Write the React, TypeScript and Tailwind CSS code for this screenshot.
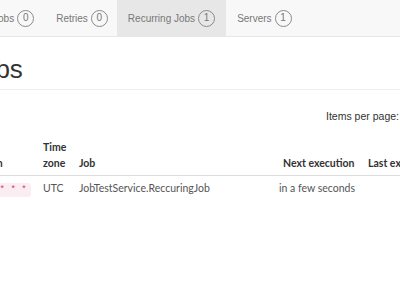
import React from "react";

function Badge({ n }: { n: number }) {
  return (
    <span className="ml-[3px] inline-flex h-[17px] w-[17px] items-center justify-center rounded-full border border-[#8a8a8a] text-[10px] leading-none text-[#777]">
      {n}
    </span>
  );
}

function Tab({ label, n, active }: { label: string; n: number; active?: boolean }) {
  return (
    <div
      className={
        "flex h-full shrink-0 items-center px-[11px] " + (active ? "bg-[#e7e7e7]" : "")
      }
    >
      <span className="text-[10px] text-[#777]">{label}</span>
      <Badge n={n} />
    </div>
  );
}

export default function App() {
  return (
    <div
      className="h-[284px] w-[400px] overflow-hidden bg-white"
      style={{ fontFamily: '"Liberation Sans", Arial, sans-serif' }}
    >
      <div className="flex h-[37px] border-b border-[#e7e7e7] bg-[#f8f8f8]">
        <div className="-ml-[68px] flex h-full">
          <Tab label="Scheduled Jobs" n={0} />
          <div className="-mr-[2px] flex">
            <Tab label="Retries" n={0} />
          </div>
          <Tab label="Recurring Jobs" n={1} active />
          <Tab label="Servers" n={1} />
        </div>
      </div>
      <div className="border-b border-[#eee] pb-[5px] pt-[17px]">
        <h1 className="-ml-[152px] whitespace-nowrap text-[26px] leading-[30px] text-[#333]">
          Recurring Jobs
        </h1>
      </div>
      <div className="flex justify-end pr-[1px] pt-[19px] text-[10.5px] text-[#333]">
        Items per page:
      </div>
      <div
        style={{ fontFamily: 'Lato, "Noto Sans", sans-serif' }}
        className="-ml-[140px] mt-[14px] w-[700px] text-[10.5px]"
      >
        <div className="flex items-end border-b border-[#ddd] pb-[4px] font-bold text-[#333]">
          <div className="w-[183px] shrink-0 pl-[120px] leading-[16px]">Cron</div>
          <div className="w-[36px] shrink-0 leading-[16px]">
            Time
            <br />
            zone
          </div>
          <div className="w-[200px] shrink-0 leading-[16px]">Job</div>
          <div className="w-[89px] shrink-0 pl-[4px] leading-[16px]">Next execution</div>
          <div className="w-[100px] shrink-0 leading-[16px]">Last execution</div>
        </div>
        <div className="flex items-center py-[5px] text-[#555]">
          <div className="w-[183px] shrink-0 pl-[114px]">
            <span
              className="rounded-[3px] bg-[#fbeef2] px-[4px] py-[2px] text-[9px] text-[#d6336c]"
              style={{ fontFamily: '"Liberation Mono", monospace' }}
            >
              * * * * *
            </span>
          </div>
          <div className="w-[36px] shrink-0">UTC</div>
          <div className="w-[200px] shrink-0">JobTestService.ReccuringJob</div>
          <div className="w-[89px] shrink-0">in a few seconds</div>
        </div>
      </div>
    </div>
  );
}
